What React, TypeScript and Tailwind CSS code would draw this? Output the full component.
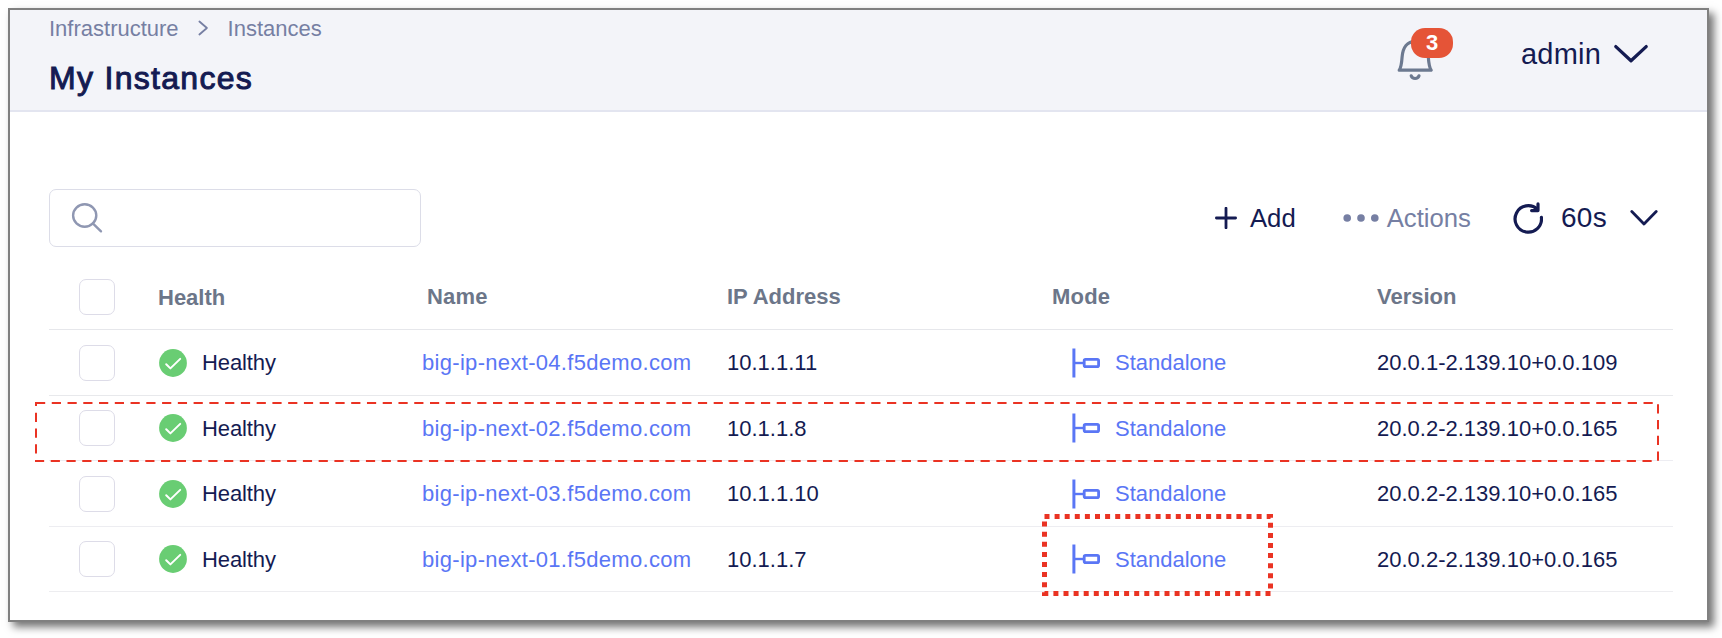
import React from "react";

type Instance = {
  name: string;
  ip: string;
  version: string;
  height: string;
  line: string;
};

const instances: Instance[] = [
  { name: "big-ip-next-04.f5demo.com", ip: "10.1.1.11", version: "20.0.1-2.139.10+0.0.109", height: "h-[66px]", line: "border-[#e8e9ec]" },
  { name: "big-ip-next-02.f5demo.com", ip: "10.1.1.8", version: "20.0.2-2.139.10+0.0.165", height: "h-[65px]", line: "border-[#ededf2]" },
  { name: "big-ip-next-03.f5demo.com", ip: "10.1.1.10", version: "20.0.2-2.139.10+0.0.165", height: "h-[66px]", line: "border-[#ededf1]" },
  { name: "big-ip-next-01.f5demo.com", ip: "10.1.1.7", version: "20.0.2-2.139.10+0.0.165", height: "h-[65px]", line: "border-[#ededf0]" },
];

const columns = "grid grid-cols-[109px_264px_305px_325px_325px_1fr] items-center";

function Chevron({ className, d, stroke, box }: { className: string; d: string; stroke: number; box: string }) {
  return (
    <svg className={className} viewBox={box} fill="none" stroke="currentColor" strokeWidth={stroke} strokeLinecap="round" strokeLinejoin="round">
      <path d={d} />
    </svg>
  );
}

function Checkbox() {
  return <div className="ml-[30px] size-9 rounded-[7px] border border-[#dddce8] bg-white" />;
}

function HealthyIcon() {
  return (
    <svg className="size-7 shrink-0" viewBox="0 0 28 28" fill="none">
      <circle cx="14" cy="14" r="13.9" fill="#69cd73" />
      <path d="M7.2 15.2 11.4 19.4 21.2 9.9" stroke="#fff" strokeWidth="2" strokeLinecap="round" strokeLinejoin="round" />
    </svg>
  );
}

function StandaloneIcon() {
  return (
    <svg className="h-[30px] w-7 shrink-0" viewBox="0 0 28 30" fill="none" stroke="#5a76f5">
      <path d="M1.9 .5V29.5" strokeWidth="3" />
      <path d="M3 15H11" strokeWidth="2.4" />
      <rect x="12.2" y="11.4" width="14.4" height="7.2" rx="1.4" strokeWidth="2.8" />
    </svg>
  );
}

function Bell() {
  return (
    <div className="relative h-[53px] w-[56px]">
      <svg className="h-[53px] w-[38px]" viewBox="0 0 38 53" fill="none" stroke="#6c7990" strokeWidth="3.2" strokeLinecap="round" strokeLinejoin="round">
        <path d="M2.2 42.2C4.4 39 4.7 35 5.1 29C5.8 19.5 10.5 13.3 18.2 13.3S30.6 19.5 31.3 29C31.7 35 32 39 34.2 42.2Z" />
        <path d="M14.2 47.8C15.4 51.4 20.8 51.4 22 47.8" />
      </svg>
      <span className="absolute top-0 left-[14px] flex h-[30px] w-[42px] items-center justify-center rounded-[14px] bg-[#e55437] text-[22px] font-bold text-white">
        3
      </span>
    </div>
  );
}

export default function App() {
  return (
    <div className="h-[638px] w-[1722px] overflow-hidden bg-white p-2 font-['Liberation_Sans',Arial,sans-serif] text-[22px] leading-6 text-[#141b52]">
      <div className="relative h-[614px] w-[1701px] border-2 border-[#808080] bg-white shadow-[5px_5px_8px_rgba(0,0,0,0.55)]">
        <header className="flex h-[102px] justify-between border-b-2 border-[#e3e5f0] bg-[#f3f4f9] pr-[58px] pl-[39px]">
          <div className="pt-[7px]">
            <nav className="flex items-center text-[#767fa3]">
              <span>Infrastructure</span>
              <Chevron className="mt-[-3px] ml-[18px] h-[18px] w-3" box="0 0 12 18" d="M2.4 2.5 9.9 9 2.4 15.5" stroke={1.8} />
              <span className="ml-[19px]">Instances</span>
            </nav>
            <h1 className="mt-[17px] text-[32px] leading-10 tracking-[1.3px] [-webkit-text-stroke:1px_#141b52]">My Instances</h1>
          </div>
          <div className="flex items-start pt-[18px]">
            <Bell />
            <span className="mt-[10px] ml-[68px] text-[29px] leading-8 tracking-[0.2px]">admin</span>
            <Chevron className="mt-[15px] ml-3 h-[22px] w-9" box="0 0 36 22" d="M2.8 3.6 18 17.8 33.2 3.6" stroke={3.3} />
          </div>
        </header>

        <main className="pr-[34px] pl-[39px]">
          <div className="flex h-[135px] items-end justify-between">
            <div className="flex h-[58px] w-[372px] items-center rounded-[7px] border border-[#dcdde8] pl-[21px]">
              <svg className="size-8 text-[#8f97b2]" viewBox="0 0 32 32" fill="none" stroke="currentColor" strokeWidth="2.4" strokeLinecap="round">
                <ellipse cx="13.7" cy="13.5" rx="11.6" ry="11.2" />
                <path d="M21.8 21.3 30 29.3" />
              </svg>
            </div>
            <div className="flex h-[58px] items-center pr-[15px] text-[25.7px]">
              <svg className="mr-[13px] size-[22px]" viewBox="0 0 22 22" fill="none" stroke="currentColor" strokeWidth="2.8" strokeLinecap="round">
                <path d="M11 1.2V20.8M1.4 11H20.6" />
              </svg>
              <span>Add</span>
              <svg className="ml-[47px] h-2 w-9 text-[#767fa3]" viewBox="0 0 36 8" fill="currentColor">
                <circle cx="4.2" cy="4" r="3.8" />
                <circle cx="18" cy="4" r="3.8" />
                <circle cx="31.8" cy="4" r="3.8" />
              </svg>
              <span className="ml-2 text-[#767fa3]">Actions</span>
              <svg className="ml-[42px] h-8 w-[30px]" viewBox="0 0 30 32" fill="none" stroke="currentColor" strokeWidth="3.2" strokeLinecap="round" strokeLinejoin="round">
                <path d="M28.4 15.4A13.2 13.2 0 1 1 24.4 7.4" />
                <path d="M25 1.9V8.6H18.6" />
              </svg>
              <span className="ml-[18px] text-[28px] tracking-[0.3px]">60s</span>
              <Chevron className="ml-[23px] h-[18px] w-[28px]" box="0 0 28 18" d="M1.8 2.6 14 15 26.2 2.6" stroke={2.8} />
            </div>
          </div>

          <section className="mt-[17px] w-[1624px]">
            <div className={`${columns} h-[66px] border-b border-[#e6e7eb] font-bold text-[#6c7689]`}>
              <Checkbox />
              <span className="mt-0.5">Health</span>
              <span className="pl-[5px] tracking-[0.2px]">Name</span>
              <span>IP Address</span>
              <span className="tracking-[0.2px]">Mode</span>
              <span>Version</span>
            </div>
            {instances.map((item) => (
              <div key={item.name} className={`${columns} ${item.height} ${item.line} border-b`}>
                <Checkbox />
                <div className="flex items-center gap-[15px] pl-px">
                  <HealthyIcon />
                  <span className="mt-px tracking-[-0.1px]">Healthy</span>
                </div>
                <a className="mt-px tracking-[0.31px] text-[#5a76f5]">{item.name}</a>
                <span className="mt-px">{item.ip}</span>
                <div className="flex items-center gap-[15px] pl-5 text-[#5a76f5]">
                  <StandaloneIcon />
                  <span className="mt-px">Standalone</span>
                </div>
                <span className="mt-px">{item.version}</span>
              </div>
            ))}
          </section>
        </main>

        <svg className="pointer-events-none absolute top-[391px] left-[24px] h-[64px] w-[1628px]" viewBox="34 401 1628 64" fill="none" stroke="#ea3323">
          <path d="M36 403H1658V461H36Z" strokeWidth="2" strokeDasharray="9.2 6.56" />
        </svg>
        <svg className="pointer-events-none absolute top-[502px] left-[1030px] h-[86px] w-[236px]" viewBox="1040 512 236 86" fill="none" stroke="#ea3323">
          <path d="M1044.5 516.5H1270.5V593.5H1044.5Z" strokeWidth="5" strokeDasharray="5 5.1" />
        </svg>
      </div>
    </div>
  );
}
